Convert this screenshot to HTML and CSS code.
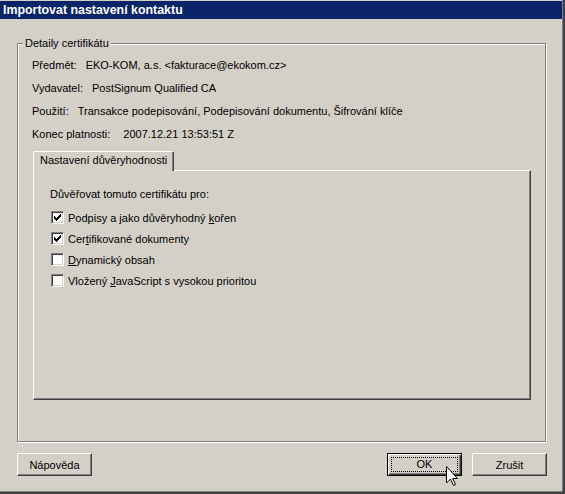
FILE: index.html
```html
<!DOCTYPE html>
<html lang="cs">
<head>
<meta charset="utf-8">
<title>Importovat nastavení kontaktu</title>
<link rel="stylesheet" href="styles.css">
</head>
<body>
<div class="window">
  <div class="titlebar">Importovat nastavení kontaktu</div>
  <div class="client">
    <section class="group">
      <div class="group-title">Detaily certifikátu</div>
      <div class="fields">
        <div class="field"><span>Předmět:</span><span>EKO-KOM, a.s. &lt;fakturace@ekokom.cz&gt;</span></div>
        <div class="field"><span>Vydavatel:</span><span>PostSignum Qualified CA</span></div>
        <div class="field"><span>Použití:</span><span>Transakce podepisování, Podepisování dokumentu, Šifrování klíče</span></div>
        <div class="field field-wide"><span>Konec platnosti:</span><span>2007.12.21 13:53:51 Z</span></div>
      </div>
      <div class="tabs"><div class="tab">Nastavení důvěryhodnosti</div></div>
      <div class="panel">
        <div class="panel-heading">Důvěřovat tomuto certifikátu pro:</div>
        <div class="checks">
          <div class="check"><span class="box"><svg width="7" height="7" viewBox="0 0 7 7"><path d="M0 2h1v3H0zM1 3h1v3H1zM2 4h1v3H2zM3 3h1v3H3zM4 2h1v3H4zM5 1h1v3H5zM6 0h1v3H6z" fill="#000"/></svg></span><span>Podpisy a jako důvěryhodný <u>k</u>ořen</span></div>
          <div class="check"><span class="box"><svg width="7" height="7" viewBox="0 0 7 7"><path d="M0 2h1v3H0zM1 3h1v3H1zM2 4h1v3H2zM3 3h1v3H3zM4 2h1v3H4zM5 1h1v3H5zM6 0h1v3H6z" fill="#000"/></svg></span><span>Cer<u>t</u>ifikované dokumenty</span></div>
          <div class="check"><span class="box"></span><span><u>D</u>ynamický obsah</span></div>
          <div class="check"><span class="box"></span><span>Vložený <u>J</u>avaScript s vysokou prioritou</span></div>
        </div>
      </div>
    </section>
    <div class="buttons">
      <button class="btn">Nápověda</button>
      <div class="btn-group">
        <button class="btn btn-default"><span class="focus">OK</span></button>
        <button class="btn">Zrušit</button>
      </div>
    </div>
  </div>
  <svg class="cursor" width="13" height="21" viewBox="0 0 13 21"><path d="M0.5 0.5V17L4.5 13L7.5 19.5L9.5 18.5L6.7 12.5H11.5Z" fill="#fff" stroke="#000" stroke-linejoin="miter"/></svg>
</div>
</body>
</html>
```

FILE: styles.css
```css
* { box-sizing: border-box; }
html, body { margin: 0; padding: 0; }
body {
  background: #d4d0c8;
  font-family: "Liberation Sans", Arial, sans-serif;
  font-size: 11px;
  color: #000;
  width: 565px;
  height: 494px;
  overflow: hidden;
}
.window {
  position: relative;
  width: 565px;
  height: 494px;
  padding-top: 1px;
  border-right: 2px solid #404040;
  border-bottom: 2px solid #404040;
  box-shadow: inset -1px -1px 0 #808080;
}
.titlebar {
  height: 18px;
  margin-right: 1px;
  background: #0a246a;
  color: #fff;
  font-weight: bold;
  font-size: 12.4px;
  line-height: 18px;
  padding-left: 3px;
  white-space: nowrap;
}
.group {
  width: 529px;
  height: 399px;
  margin: 24px 0 0 17px;
  padding: 0 14px;
  border: 1px solid #808080;
  box-shadow: inset 1px 1px 0 #fff, 1px 1px 0 #fff;
}
.group-title {
  display: table;
  margin: -7px 0 0 -9px;
  padding: 0 2px;
  background: #d4d0c8;
  line-height: 13px;
}
.fields { margin-top: 3px; }
.field {
  display: flex;
  align-items: center;
  gap: 9px;
  height: 23px;
  white-space: nowrap;
}
.field-wide { gap: 13px; }
.tabs {
  display: flex;
  margin-top: 6px;
  padding-left: 1px;
}
.tab {
  position: relative;
  z-index: 1;
  height: 20px;
  margin-bottom: -1px;
  padding: 2px 6px 0 6px;
  line-height: 13px;
  background: #d4d0c8;
  border-top: 1px solid #fff;
  border-left: 1px solid #fff;
  border-right: 1px solid #404040;
  border-radius: 2px 2px 0 0;
  box-shadow: inset -1px 0 0 #808080;
  white-space: nowrap;
}
.panel {
  width: 498px;
  height: 230px;
  margin-left: 1px;
  padding: 17px 0 0 16px;
  border-top: 1px solid #fff;
  border-left: 1px solid #fff;
  border-right: 1px solid #404040;
  border-bottom: 1px solid #404040;
  box-shadow: inset -1px -1px 0 #808080;
}
.panel-heading { line-height: 13px; }
.checks { margin-top: 6px; }
.check {
  display: flex;
  align-items: center;
  gap: 4px;
  height: 21px;
  padding-left: 1px;
  white-space: nowrap;
}
.box {
  display: block;
  width: 13px;
  height: 13px;
  padding: 2px;
  background: #fff;
  border: 1px solid;
  border-color: #808080 #fff #fff #808080;
  box-shadow: inset 1px 1px 0 #404040, inset -1px -1px 0 #d4d0c8;
}
.box svg { display: block; }
.buttons {
  display: flex;
  justify-content: space-between;
  margin: 11px 16px 0 17px;
}
.btn-group { display: flex; gap: 10px; }
.btn {
  width: 75px;
  height: 23px;
  padding: 0;
  margin: 0;
  font-family: "Liberation Sans", Arial, sans-serif;
  font-size: 11px;
  color: #000;
  background: #d4d0c8;
  border: 1px solid;
  border-color: #fff #404040 #404040 #fff;
  box-shadow: inset -1px -1px 0 #808080;
  border-radius: 0;
}
.btn-default {
  border: 1px solid #000;
  box-shadow: inset 1px 1px 0 #fff, inset -1px -1px 0 #404040, inset -2px -2px 0 #808080;
}
.focus {
  display: block;
  margin: 3px;
  height: 15px;
  line-height: 13px;
  border: 1px dotted #000;
}
.cursor {
  position: absolute;
  left: 446px;
  top: 466px;
  display: block;
}
```
